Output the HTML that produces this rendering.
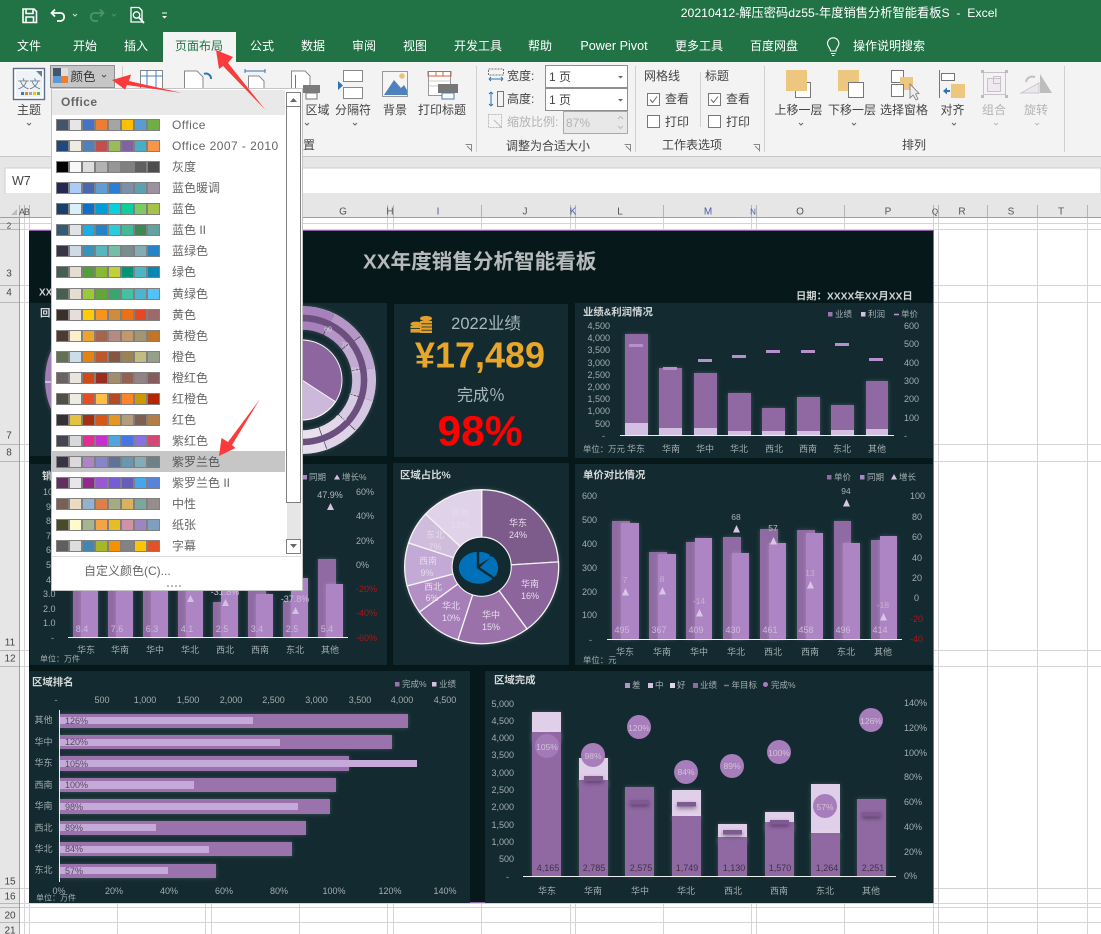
<!DOCTYPE html>
<html><head><meta charset="utf-8"><style>
html,body{margin:0;padding:0;background:#fff}
#p{position:relative;width:1101px;height:934px;overflow:hidden;font-family:"Liberation Sans","Noto Sans CJK SC",sans-serif}
svg{position:absolute;left:0;top:0}
text{font-family:"Liberation Sans","Noto Sans CJK SC",sans-serif;dominant-baseline:central}
.tb{font-size:12px;fill:#fff;text-anchor:middle}
.rb{font-size:12px;fill:#444;text-anchor:middle}
.rl{font-size:12px;fill:#444}
.ch{font-size:10px;fill:#555;text-anchor:middle}
.rh{font-size:10px;fill:#444;text-anchor:middle}
.ax{font-size:9px;fill:#a3aeb0}
.ar{font-size:9px;fill:#a3aeb0;text-anchor:end}
.am{font-size:9px;fill:#a3aeb0;text-anchor:middle}
.re{font-size:9px;fill:#b01414}
.ti{font-size:10.4px;font-weight:bold;fill:#d4d8d8}
.lg{font-size:8.5px;fill:#a3aeb0}
.pv{font-size:9px;fill:#e6dcec;text-anchor:middle}
.bv{font-size:9px;fill:#cdbcd6;text-anchor:middle}
.dv{font-size:9px;fill:#3e3346;text-anchor:middle}
.pc{font-size:9px;fill:#574a60}
.bb{font-size:8.5px;fill:#cfc4d6;text-anchor:middle}
.gl{filter:drop-shadow(0 0 2px rgba(255,255,255,.2))}
#d{position:absolute;left:51px;top:88px;width:252px;height:503px;background:#fff;border:1px solid #c4c4c4;box-sizing:border-box}
#oh{position:absolute;left:52px;top:90px;width:233px;height:25px;background:#e9e9e9;font-size:12px;font-weight:bold;color:#666;line-height:24px;padding-left:9px;box-sizing:border-box;letter-spacing:.4px}
#hl{position:absolute;left:52px;top:451px;width:233px;height:21px;background:#c6c6c6}
.r{position:absolute;left:56px;width:104px;height:12px;background:#808080}
.r i{position:absolute;top:1px;width:11px;height:10px}
.r i:nth-child(1){left:1px}.r i:nth-child(2){left:14px}.r i:nth-child(3){left:27px}.r i:nth-child(4){left:40px}.r i:nth-child(5){left:53px}.r i:nth-child(6){left:66px}.r i:nth-child(7){left:79px}.r i:nth-child(8){left:92px}
.r span{position:absolute;left:116px;top:-3px;line-height:18px;font-size:12px;color:#666;white-space:nowrap}
.l{letter-spacing:.45px}
</style></head><body><div id="p">
<svg width="1101" height="934" viewBox="0 0 1101 934">
<!-- sheet -->
<rect width="1101" height="934" fill="#fff"/>
<g stroke="#d4d4d4" stroke-width="1">
<path d="M24.5 217V934M29.5 217V934M117.5 217V934M205.5 217V934M211.5 217V934M299.5 217V934M387.5 217V934M393.5 217V934M481.5 217V934M570.5 217V934M575.5 217V934M663.5 217V934M751.5 217V934M756.5 217V934M844.5 217V934M933.5 217V934M938.5 217V934M987.5 217V934M1037.5 217V934M1087.5 217V934"/>
<path d="M19 223.5H1101M19 229.5H1101M19 285.5H1101M19 302.5H1101M19 444.5H1101M19 461.5H1101M19 650.5H1101M19 666.5H1101M19 888.5H1101M19 903.5H1101M19 907.5H1101M19 922.5H1101"/>
</g>
<rect x="0" y="217" width="19" height="717" fill="#e6e6e6"/>
<path d="M19.5 217V934" stroke="#a0a0a0"/>
<g stroke="#b8b8b8"><path d="M0 223.5H19M0 229.5H19M0 285.5H19M0 302.5H19M0 444.5H19M0 461.5H19M0 650.5H19M0 666.5H19M0 888.5H19M0 903.5H19M0 907.5H19M0 922.5H19"/></g>
<text class="rh" x="9" y="274">3</text><text class="rh" x="9" y="293">4</text><text class="rh" x="9" y="436">7</text><text class="rh" x="9" y="453">8</text><text class="rh" x="10" y="643">11</text><text class="rh" x="10" y="659">12</text><text class="rh" x="10" y="882">15</text><text class="rh" x="10" y="897">16</text><text class="rh" x="10" y="916">20</text><text class="rh" x="10" y="931">21</text><text class="rh" x="9" y="226" style="font-size:8px">2</text>
<!-- chrome -->
<rect width="1101" height="62" fill="#217346"/>
<rect y="62" width="1101" height="94" fill="#f3f3f3"/>
<rect y="156" width="1101" height="12" fill="#e6e6e6"/><path d="M0 156.5H1101" stroke="#c8c8c8"/>
<rect y="168" width="1101" height="27" fill="#e6e6e6"/>
<rect x="5" y="168" width="1096" height="26" fill="#fff" stroke="#cfcfcf"/>
<rect y="194" width="1101" height="23" fill="#e6e6e6"/>
<path d="M0 217.5H1101" stroke="#9f9f9f"/>
<g stroke="#b4b4b4"><path d="M19.5 205V217M24.5 205V217M29.5 205V217M299.5 205V217M387.5 205V217M393.5 205V217M481.5 205V217M570.5 205V217M575.5 205V217M663.5 205V217M751.5 205V217M756.5 205V217M844.5 205V217M933.5 205V217M938.5 205V217M987.5 205V217M1037.5 205V217M1087.5 205V217"/></g>
<path d="M17 209V215H11Z" fill="#bdbdbd"/>
<text class="ch" x="22" y="212" style="font-size:9px">A</text><text class="ch" x="27" y="212" style="font-size:9px">B</text>
<text class="ch" x="343" y="212">G</text><text class="ch" x="390" y="212">H</text><text class="ch" x="438" y="212" style="fill:#4a5aa8">I</text><text class="ch" x="525" y="212">J</text><text class="ch" x="573" y="212" style="fill:#4a5aa8">K</text><text class="ch" x="620" y="212">L</text><text class="ch" x="708" y="212" style="fill:#4a5aa8">M</text><text class="ch" x="753" y="212" style="fill:#4a5aa8;font-size:8px">N</text><text class="ch" x="800" y="212">O</text><text class="ch" x="888" y="212">P</text><text class="ch" x="935" y="212" style="font-size:8px">Q</text><text class="ch" x="962" y="212">R</text><text class="ch" x="1011" y="212">S</text><text class="ch" x="1061" y="212">T</text>
<text x="12" y="181" style="font-size:12.5px;fill:#444">W7</text>
<!-- QAT -->
<g fill="none" stroke="#fff" stroke-width="1.6"><path d="M23 9H34L36.5 11.5V22.5H23Z"/><path d="M26 9V13.5H33V9M26 22.5V17H33.5V22.5"/></g>
<g fill="none" stroke="#fff" stroke-width="1.8"><path d="M55 9.5L51.5 13L55 16.5"/><path d="M52 13H60.5C65.5 13 65.5 21 60 21H57"/></g>
<path d="M73 14L75 16L77 14" stroke="#cfe3d7" fill="none"/>
<g fill="none" stroke="#4e9270" stroke-width="1.8"><path d="M100 9.5L103.5 13L100 16.5"/><path d="M103 13H94.5C89.5 13 89.5 21 95 21H98"/></g>
<path d="M112 14L114 16L116 14" stroke="#4e9270" fill="none"/>
<g fill="none" stroke="#fff" stroke-width="1.3"><path d="M131 7.5H139L142 10.5V22H131Z"/><circle cx="136.5" cy="15" r="3.2"/><path d="M139 17.5L144 23" stroke-width="1.8"/></g>
<path d="M162 13H167" stroke="#fff"/><path d="M162 16H167L164.5 18.5Z" fill="#fff"/>
<!-- tabs -->
<text x="839" y="13" style="font-size:12.25px;fill:#fff;text-anchor:middle">20210412-解压密码dz55-年度销售分析智能看板S &#160;- &#160;Excel</text>
<rect x="163" y="32" width="73" height="30" fill="#f3f3f3"/>
<text class="tb" x="29" y="46">文件</text><text class="tb" x="85" y="46">开始</text><text class="tb" x="136" y="46">插入</text>
<text class="tb" x="199" y="46" style="fill:#217346">页面布局</text>
<text class="tb" x="262" y="46">公式</text><text class="tb" x="313" y="46">数据</text><text class="tb" x="364" y="46">审阅</text><text class="tb" x="415" y="46">视图</text><text class="tb" x="478" y="46">开发工具</text><text class="tb" x="540" y="46">帮助</text>
<text class="tb" x="614" y="46" style="font-size:12.6px">Power Pivot</text><text class="tb" x="699" y="46">更多工具</text><text class="tb" x="774" y="46">百度网盘</text><text class="tb" x="889" y="46">操作说明搜索</text>
<g fill="none" stroke="#fff" stroke-width="1.1"><path d="M830.5 51C830.5 47.5 827.5 47 827.5 43.5A5.7 5.7 0 0 1 838.9 43.5C838.9 47 835.9 47.5 835.9 51Z"/><path d="M831 53.5H835.5M832 55.5H834.5"/></g>
<!-- theme button -->
<rect x="13.5" y="68.5" width="31" height="31" fill="#fff" stroke="#5c6f8c" stroke-width="1.4"/>
<path d="M16 71H37L42 76V97H16Z" fill="#eef3f7"/><path d="M36 71H42V77Z" fill="#6a7c96"/>
<text x="23.5" y="85" style="font-size:11.5px;fill:#6b7f8f;text-anchor:middle">文</text><text x="35" y="85" style="font-size:11.5px;fill:#6b7f8f;text-anchor:middle">文</text>
<g><rect x="21" y="92" width="3" height="3" fill="#4472c4"/><rect x="25" y="92" width="3" height="3" fill="#ed7d31"/><rect x="29" y="92" width="3" height="3" fill="#a5a5a5"/><rect x="33" y="92" width="3" height="3" fill="#ffc000"/><rect x="37" y="92" width="3" height="3" fill="#70ad47"/></g>
<text class="rb" x="29" y="110">主题</text><path d="M27 123L29 125L31 123" fill="none" stroke="#666"/>
<!-- colors btn -->
<rect x="50.5" y="65.5" width="64" height="22" fill="#c6c6c6" stroke="#8f8f8f"/>
<rect x="53" y="68" width="8" height="8" fill="#44546a"/><rect x="61" y="68" width="7" height="8" fill="#dfdfdf"/><rect x="53" y="76" width="8" height="7" fill="#5b9bd5"/><rect x="61" y="76" width="7" height="7" fill="#ed7d31"/>
<text class="rb" x="83" y="77" style="fill:#333;font-size:12.5px">颜色</text><path d="M102 75L104 77L106 75" fill="none" stroke="#555"/>
<path d="M122.5 66V150" stroke="#d0d0d0"/>
<!-- hidden row icons -->
<g fill="none" stroke="#4a7ebb"><rect x="140.5" y="70.5" width="22" height="18" fill="#fff" stroke="#888"/><path d="M147 70V89M156 70V89M140 76H163"/></g>
<path d="M184.5 88V71H197L203 77V88" fill="#fff" stroke="#888"/><path d="M204 74A5 5 0 0 1 211 79" fill="none" stroke="#2e75b6" stroke-width="2"/>
<path d="M245 71H265M245 69V73M265 69V73" stroke="#2e75b6"/><path d="M248.5 88V76H259L264 81V88" fill="#fff" stroke="#888"/>
<path d="M291.5 98V71H305L310 76V85" fill="#fff" stroke="#888"/><path d="M295.5 75V98" stroke="#4a7ebb" fill="none"/><rect x="303" y="85" width="17" height="8" fill="#7a7a7a"/><rect x="306" y="93" width="11" height="6" fill="#fff" stroke="#777"/>
<text class="rb" x="317.5" y="110">区域</text><path d="M305 123L307 125L309 123" fill="none" stroke="#666"/>
<rect x="343.5" y="70.5" width="19" height="11" fill="#fff" stroke="#888"/><rect x="343.5" y="87.5" width="19" height="11" fill="#fff" stroke="#888"/><path d="M338 81V90L343 85.5Z" fill="#2e75b6"/>
<text class="rb" x="353" y="110">分隔符</text><path d="M353 123L355 125L357 123" fill="none" stroke="#666"/>
<rect x="382.5" y="71.5" width="25" height="25" fill="#f5f5f5" stroke="#999"/><path d="M384 95L394 80L401 88L404 85L407 90V95Z" fill="#4f81bd"/><circle cx="402" cy="76" r="2.8" fill="#e9c37c"/>
<text class="rb" x="395" y="110">背景</text>
<rect x="428.5" y="71.5" width="22" height="24" fill="#fff" stroke="#999"/><path d="M428 71.5H451V76H428ZM436 71V76M443 71V76" fill="none" stroke="#d4603a"/><path d="M429 81H450M429 86H450" stroke="#ccc"/><rect x="438" y="84" width="20" height="9" fill="#777"/><rect x="442" y="93" width="12" height="6" fill="#fff" stroke="#4a7ebb"/>
<text class="rb" x="442" y="110">打印标题</text>
<text class="rb" x="309" y="145">置</text>
<path d="M465.5 144.5H471.5V151.5M467 146L471 150" fill="none" stroke="#888"/>
<path d="M476.5 66V152" stroke="#d0d0d0"/>
<!-- scale group -->
<g fill="none" stroke="#777"><rect x="488.5" y="69" width="15" height="6" stroke-dasharray="2 1"/></g><path d="M489 79H503M489 79L491 77M489 79L491 81M503 79L501 77M503 79L501 81" stroke="#2e75b6" fill="none"/>
<path d="M491 92V106M491 92L489 94M491 92L493 94M491 106L489 104M491 106L493 104" stroke="#2e75b6" fill="none"/><rect x="497.5" y="91.5" width="6" height="15" fill="none" stroke="#777"/>
<rect x="488.5" y="114.5" width="13" height="13" fill="none" stroke="#bbb" stroke-dasharray="2 1"/><path d="M494 120L502 128" stroke="#bbb"/>
<text class="rl" x="507" y="76">宽度:</text><text class="rl" x="507" y="99">高度:</text><text class="rl" x="507" y="122" style="fill:#b4b4b4">缩放比例:</text>
<rect x="545.5" y="65.5" width="82" height="22" fill="#fff" stroke="#8f8f8f"/><rect x="545.5" y="88.5" width="82" height="22" fill="#fff" stroke="#8f8f8f"/>
<rect x="563.5" y="111.5" width="64" height="22" fill="#e8e8e8" stroke="#aaa"/>
<text class="rl" x="549" y="77">1 页</text><text class="rl" x="549" y="100">1 页</text><text class="rl" x="566" y="123" style="fill:#b4b4b4">87%</text>
<path d="M618 76H623L620.5 78.5ZM618 99H623L620.5 101.5Z" fill="#666"/><path d="M618 119L620.5 116.5L623 119M618 126L620.5 128.5L623 126" fill="none" stroke="#bbb"/>
<text class="rb" x="548" y="146">调整为合适大小</text><path d="M624.5 144.5H630.5V151.5M626 146L630 150" fill="none" stroke="#888"/>
<path d="M635.5 66V152" stroke="#d0d0d0"/>
<!-- sheet options -->
<text class="rl" x="644" y="76">网格线</text><text class="rl" x="705" y="76">标题</text><path d="M700.5 72V127" stroke="#d0d0d0"/>
<g fill="#fff" stroke="#777"><rect x="647.5" y="93.5" width="12" height="12"/><rect x="647.5" y="115.5" width="12" height="12"/><rect x="708.5" y="93.5" width="12" height="12"/><rect x="708.5" y="115.5" width="12" height="12"/></g>
<path d="M650 99.5L652.5 102.5L657 96.5M711 99.5L713.5 102.5L718 96.5" fill="none" stroke="#666"/>
<text class="rl" x="665" y="99">查看</text><text class="rl" x="665" y="122">打印</text><text class="rl" x="726" y="99">查看</text><text class="rl" x="726" y="122">打印</text>
<text class="rb" x="692" y="145">工作表选项</text><path d="M753.5 144.5H759.5V151.5M755 146L759 150" fill="none" stroke="#888"/>
<path d="M764.5 66V152" stroke="#d0d0d0"/>
<!-- arrange -->
<rect x="795.5" y="82.5" width="15" height="15" fill="#fff" stroke="#777"/><rect x="786" y="70" width="21" height="21" fill="#edc67f"/>
<text class="rb" x="798.5" y="110">上移一层</text><path d="M799 123L801 125L803 123" fill="none" stroke="#666"/>
<rect x="838" y="70" width="21" height="21" fill="#edc67f"/><rect x="848.5" y="82.5" width="15" height="15" fill="#fff" stroke="#777"/>
<text class="rb" x="852" y="110">下移一层</text><path d="M852 123L854 125L856 123" fill="none" stroke="#666"/>
<rect x="891.5" y="70.5" width="12" height="12" fill="#fff" stroke="#777"/><rect x="900" y="77" width="13" height="13" fill="#edc67f"/><rect x="891.5" y="84.5" width="12" height="12" fill="#fff" stroke="#777"/><path d="M910 84V98L913 95L916 100L918 99L915.5 94L919 93.5Z" fill="#eee" stroke="#777" stroke-width=".8"/>
<text class="rb" x="904" y="110">选择窗格</text>
<path d="M939.5 70V98" stroke="#777"/><rect x="941.5" y="73.5" width="13" height="7" fill="#fff" stroke="#777"/><path d="M943 91L947 87.5V94.5Z" fill="#2e75b6"/><path d="M946 91H950" stroke="#2e75b6" stroke-width="2"/><rect x="951" y="84" width="14" height="14" fill="#edc67f"/>
<text class="rb" x="952.5" y="110">对齐</text><path d="M952 123L954 125L956 123" fill="none" stroke="#666"/>
<g fill="none" stroke="#c8c0ca"><rect x="983.5" y="72.5" width="22" height="22"/><rect x="987.5" y="78.5" width="13" height="13" fill="#efe9f2"/><rect x="993.5" y="76.5" width="7" height="7"/></g><g fill="#bbb"><rect x="981" y="70" width="3" height="3"/><rect x="1005" y="70" width="3" height="3"/><rect x="981" y="95" width="3" height="3"/><rect x="1005" y="95" width="3" height="3"/></g>
<text class="rb" x="994" y="110" style="fill:#b4b4b4">组合</text><path d="M994 123L996 125L998 123" fill="none" stroke="#bbb"/>
<path d="M1021 93L1039 83V93Z" fill="#ece7ef" stroke="#c8c8c8"/><path d="M1040 74L1052 93H1040Z" fill="#bdbdbd"/><path d="M1026 82C1027 77 1031 76 1035 77" fill="none" stroke="#c0c0c0" stroke-width="2"/>
<text class="rb" x="1036" y="110" style="fill:#b4b4b4">旋转</text><path d="M1035 123L1037 125L1039 123" fill="none" stroke="#bbb"/>
<text class="rb" x="914" y="145">排列</text>
<path d="M1064.5 66V152" stroke="#d0d0d0"/>

<!-- dashboard -->
<rect x="29" y="230" width="905" height="673" fill="#07181b"/>
<path d="M29 230.5H934" stroke="#8a62a0"/><path d="M933.5 230V903" stroke="#8b6a9c"/><path d="M470 902.5H486" stroke="#8a62a0"/>
<g fill="#132a30">
<rect x="30" y="303" width="357" height="153"/><rect x="394" y="304" width="174" height="153"/><rect x="575" y="303" width="358" height="155"/>
<rect x="30" y="464" width="357" height="201"/><rect x="393" y="463" width="176" height="202"/><rect x="575" y="464" width="358" height="201"/>
<rect x="29" y="671" width="441" height="232"/><rect x="485" y="671" width="448" height="232"/>
</g>
<text x="363" y="262" style="font-size:20.6px;font-weight:bold;fill:#b6baba">XX年度销售分析智能看板</text>
<text x="796" y="297" style="font-size:10.3px;font-weight:bold;fill:#cfd2d2">日期：XXXX年XX月XX日</text>
<text x="39" y="293" style="font-size:10px;font-weight:bold;fill:#cfd2d2">XX</text><text x="40" y="314" class="ti">回</text>

<!-- donuts -->
<g class="gl">
<circle cx="119" cy="380" r="69.5" fill="none" stroke="#a07db2" stroke-width="9"/>
<path d="M45 382H54" stroke="#fff" stroke-width="1"/>
<g transform="translate(302 380)" fill="none">
<circle r="73.5" fill="none" stroke="#fff" stroke-width=".8"/>
<g stroke-width="8.6">
<circle r="69.5" stroke="#a880bc" pathLength="360" stroke-dasharray="27 333" transform="rotate(-91)"/>
<circle r="69.5" stroke="#b596c6" pathLength="360" stroke-dasharray="26.5 333.5" transform="rotate(-63.5)"/>
<circle r="69.5" stroke="#bfa6d0" pathLength="360" stroke-dasharray="26.5 333.5" transform="rotate(-36)"/>
<circle r="69.5" stroke="#cbb8da" pathLength="360" stroke-dasharray="25.5 334.5" transform="rotate(-9)"/>
<circle r="69.5" stroke="#d6c8e2" pathLength="360" stroke-dasharray="26 334" transform="rotate(17)"/>
<circle r="69.5" stroke="#dfd3e8" pathLength="360" stroke-dasharray="26 334" transform="rotate(44)"/>
<circle r="69.5" stroke="#e6ddec" pathLength="360" stroke-dasharray="50 310" transform="rotate(71)"/>
</g>
<circle r="62" stroke="#6c4f7e" stroke-width="6.4"/>
<g stroke-width="8.6">
<circle r="54.5" stroke="#a880bc" pathLength="360" stroke-dasharray="26 334" transform="rotate(-91)"/>
<circle r="54.5" stroke="#b596c6" pathLength="360" stroke-dasharray="26 334" transform="rotate(-64)"/>
<circle r="54.5" stroke="#c3acd3" pathLength="360" stroke-dasharray="26 334" transform="rotate(-37)"/>
<circle r="54.5" stroke="#cdbbdb" pathLength="360" stroke-dasharray="26 334" transform="rotate(-10)"/>
<circle r="54.5" stroke="#d8cbe3" pathLength="360" stroke-dasharray="26 334" transform="rotate(17)"/>
<circle r="54.5" stroke="#e2d8ea" pathLength="360" stroke-dasharray="26 334" transform="rotate(44)"/>
<circle r="54.5" stroke="#e9e1ee" pathLength="360" stroke-dasharray="50 310" transform="rotate(71)"/>
</g>
</g>
<circle cx="302" cy="380" r="40" fill="#8d669f" stroke="#fff" stroke-width=".9"/>
<path d="M302 380L335.5 401.8A40 40 0 0 1 267.4 400Z" fill="#cbb8da" stroke="#fff" stroke-width=".9"/>
</g>
<g fill="#dcd6e0" text-anchor="middle"><text x="328" y="330" style="font-size:7px">60</text><text x="345" y="346" style="font-size:7px">70</text><text x="355" y="371" style="font-size:7px">80</text><text x="353" y="397" style="font-size:7px">90</text><text x="341" y="419" style="font-size:7px">100</text></g>

<!-- KPI -->
<g fill="#e0a02a"><ellipse cx="416" cy="324" rx="5.5" ry="2.4"/><rect x="410.5" y="326" width="11" height="2.2"/><rect x="410.5" y="329" width="11" height="2.2"/><rect x="410.5" y="331" width="11" height="1.6"/><ellipse cx="426" cy="318.5" rx="6" ry="2.6"/><rect x="420" y="321" width="12" height="2.4"/><rect x="420" y="324.2" width="12" height="2.4"/><rect x="420" y="327.4" width="12" height="2.4"/><rect x="420" y="330.6" width="12" height="2.4"/></g>
<text x="486" y="324" style="font-size:16.5px;fill:#a9b9bb;text-anchor:middle">2022业绩</text>
<text x="480" y="355" style="font-size:36px;font-weight:bold;fill:#e9a72a;text-anchor:middle">¥17,489</text>
<text x="481" y="396" style="font-size:16px;fill:#a9b9bb;text-anchor:middle">完成％</text>
<text x="480" y="432" style="font-size:42.5px;font-weight:bold;fill:#f00;text-anchor:middle">98%</text>

<!-- Panel: profit -->
<text class="ti" x="583" y="313">业绩&amp;利润情况</text>
<rect x="828" y="312" width="4.5" height="4.5" fill="#9a72ac"/><text class="lg" x="835" y="314">业绩</text><rect x="861" y="312" width="4.5" height="4.5" fill="#d4c0e2"/><text class="lg" x="868" y="314">利润</text><path d="M894 314.5H899" stroke="#b58dcb" stroke-width="1.6"/><text class="lg" x="901" y="314">单价</text>
<text class="ar" x="610" y="326">4,500</text><text class="ar" x="610" y="338">4,000</text><text class="ar" x="610" y="350">3,500</text><text class="ar" x="610" y="363">3,000</text><text class="ar" x="610" y="375">2,500</text><text class="ar" x="610" y="387">2,000</text><text class="ar" x="610" y="399">1,500</text><text class="ar" x="610" y="411">1,000</text><text class="ar" x="610" y="424">500</text><text class="ar" x="605" y="436">-</text>
<text class="ax" x="904" y="326">600</text><text class="ax" x="904" y="344">500</text><text class="ax" x="904" y="363">400</text><text class="ax" x="904" y="381">300</text><text class="ax" x="904" y="399">200</text><text class="ax" x="904" y="418">100</text><text class="ax" x="904" y="436">-</text>
<g class="gl" fill="#9069a3">
<rect x="625" y="334" width="23" height="101"/><rect x="659" y="368" width="23" height="67"/><rect x="694" y="373" width="23" height="62"/><rect x="728" y="393" width="23" height="42"/><rect x="762" y="408" width="23" height="27"/><rect x="797" y="397" width="23" height="38"/><rect x="831" y="405" width="23" height="30"/><rect x="866" y="381" width="22" height="54"/>
</g>
<g fill="#d3bfe1"><rect x="625" y="423" width="23" height="12"/><rect x="659" y="428" width="23" height="7"/><rect x="694" y="428" width="23" height="7"/><rect x="728" y="431" width="23" height="4"/><rect x="762" y="431" width="23" height="4"/><rect x="797" y="431" width="23" height="4"/><rect x="831" y="430" width="23" height="5"/><rect x="866" y="429" width="22" height="6"/></g>
<g fill="#b78ece"><rect x="629" y="344" width="14" height="3"/><rect x="663" y="367" width="14" height="3"/><rect x="698" y="359" width="14" height="3"/><rect x="732" y="355" width="14" height="3"/><rect x="766" y="350" width="14" height="3"/><rect x="801" y="350" width="14" height="3"/><rect x="835" y="343" width="14" height="3"/><rect x="869" y="358" width="14" height="3"/></g>
<path d="M620 435.5H894" stroke="#f0f0f0"/>
<text class="ax" x="583" y="449" style="font-size:8.4px">单位：万元</text>
<text class="am" x="636" y="449">华东</text><text class="am" x="671" y="449">华南</text><text class="am" x="705" y="449">华中</text><text class="am" x="739" y="449">华北</text><text class="am" x="774" y="449">西北</text><text class="am" x="808" y="449">西南</text><text class="am" x="842" y="449">东北</text><text class="am" x="877" y="449">其他</text>

<!-- Panel: sales compare (left) -->
<text class="ti" x="42" y="477">销</text>
<text class="ax" x="43" y="492">10</text><text class="ax" x="46" y="507">9</text><text class="ax" x="46" y="521">8</text><text class="ax" x="46" y="536">7</text><text class="ax" x="46" y="550">6</text><text class="ax" x="46" y="565">5</text><text class="ax" x="46" y="580">4</text><text class="ax" x="43" y="594">3.0</text><text class="ax" x="43" y="609">2.0</text><text class="ax" x="43" y="623">1.0</text><text class="ax" x="51" y="638">-</text>
<text class="ax" x="356" y="492">60%</text><text class="ax" x="356" y="516">40%</text><text class="ax" x="356" y="541">20%</text><text class="ax" x="356" y="565">0%</text><text class="re" x="356" y="589">-20%</text><text class="re" x="356" y="613">-40%</text><text class="re" x="356" y="638">-60%</text>
<rect x="303" y="475" width="4" height="4.5" fill="#ad84c4"/><text class="lg" x="309" y="477">同期</text><path d="M337 474.5L340 479.5H334Z" fill="#d5c0e0"/><text class="lg" x="342" y="477">增长%</text>
<g class="gl" fill="#8f6aa3"><rect x="73" y="560" width="18" height="77"/><rect x="108" y="560" width="18" height="77"/><rect x="143" y="560" width="18" height="77"/><rect x="178" y="560" width="18" height="77"/><rect x="213" y="602" width="18" height="35"/><rect x="248" y="580" width="18" height="57"/><rect x="283" y="601" width="18" height="36"/><rect x="318" y="559" width="18" height="78"/></g>
<g class="gl" fill="#ad84c4"><rect x="81" y="560" width="17" height="77"/><rect x="116" y="560" width="17" height="77"/><rect x="151" y="560" width="17" height="77"/><rect x="186" y="560" width="17" height="77"/><rect x="221" y="585" width="17" height="52"/><rect x="256" y="594" width="17" height="43"/><rect x="291" y="578" width="17" height="59"/><rect x="326" y="584" width="17" height="53"/></g>
<path d="M68 637.5H348" stroke="#f0f0f0"/>
<text class="bv" x="82" y="629">8.4</text><text class="bv" x="117" y="629">7.6</text><text class="bv" x="152" y="629">6.3</text><text class="bv" x="187" y="629">4.1</text><text class="bv" x="222" y="629">2.5</text><text class="bv" x="257" y="629">3.4</text><text class="bv" x="292" y="629">2.5</text><text class="bv" x="327" y="629">5.4</text>
<g fill="#d5c0e0"><path d="M190.5 595L194 602H187Z"/><path d="M225.5 599L229 606H222Z"/><path d="M295.5 607L299 614H292Z"/><path d="M330.5 503L334 510H327Z"/></g>
<text class="bv" x="330" y="495" style="fill:#b8bcc0">47.9%</text><text class="bv" x="295" y="599">-37.8%</text><text class="bv" x="225" y="592">-31.8%</text>
<text class="am" x="86" y="650">华东</text><text class="am" x="120" y="650">华南</text><text class="am" x="155" y="650">华中</text><text class="am" x="190" y="650">华北</text><text class="am" x="225" y="650">西北</text><text class="am" x="260" y="650">西南</text><text class="am" x="295" y="650">东北</text><text class="am" x="330" y="650">其他</text>
<text class="ax" x="40" y="659" style="font-size:8px">单位：万件</text>

<!-- Pie -->
<text class="ti" x="400" y="476">区域占比%</text>
<g class="gl" stroke="#f4f4f4" stroke-width="1.3">
<path fill="#7d5c8b" d="M481.7 489.7A77 77 0 0 1 558.5 561.9L511.1 564.85A29.5 29.5 0 0 0 481.7 537.2Z"/>
<path fill="#8b659b" d="M558.5 561.9A77 77 0 0 1 527 629L499 590.6A29.5 29.5 0 0 0 511.1 564.85Z"/>
<path fill="#9a72a9" d="M527 629A77 77 0 0 1 457.9 639.9L472.6 594.8A29.5 29.5 0 0 0 499 590.6Z"/>
<path fill="#a67fb8" d="M457.9 639.9A77 77 0 0 1 419.4 612L457.8 584A29.5 29.5 0 0 0 472.6 594.8Z"/>
<path fill="#b48fc6" d="M419.4 612A77 77 0 0 1 407.1 585.9L453.1 574A29.5 29.5 0 0 0 457.8 584Z"/>
<path fill="#c3a9d5" d="M407.1 585.9A77 77 0 0 1 408.5 542.9L453.6 557.6A29.5 29.5 0 0 0 453.1 574Z"/>
<path fill="#d0bcdd" d="M408.5 542.9A77 77 0 0 1 425.6 514L460.2 546.5A29.5 29.5 0 0 0 453.6 557.6Z"/>
<path fill="#e0d2e8" d="M425.6 514A77 77 0 0 1 481.7 489.7V537.2A29.5 29.5 0 0 0 460.2 546.5Z"/>
</g>
<text class="pv" x="518" y="523">华东</text><text class="pv" x="518" y="535">24%</text><text class="pv" x="530" y="584">华南</text><text class="pv" x="530" y="596">16%</text><text class="pv" x="491" y="615">华中</text><text class="pv" x="491" y="627">15%</text><text class="pv" x="451" y="606">华北</text><text class="pv" x="451" y="618">10%</text><text class="pv" x="433" y="587">西北</text><text class="pv" x="432" y="598">6%</text><text class="pv" x="428" y="561">西南</text><text class="pv" x="427" y="573">9%</text><text class="pv" x="435" y="535">东北</text><text class="pv" x="435" y="547">7%</text><text class="pv" x="460" y="513">其他</text><text class="pv" x="460" y="525">13%</text>
<circle cx="481.7" cy="566.7" r="29" fill="#132a30"/>
<ellipse cx="478.5" cy="567.7" rx="19.7" ry="16" fill="#0070b8"/>
<path d="M478 550V567.5L498 581M478 567.5L495 552" stroke="#132a30" stroke-width="2.4" fill="none"/>
<path d="M480 552L492 557L480 564Z" fill="#0070b8"/>

<!-- Panel: price -->
<text class="ti" x="583" y="476">单价对比情况</text>
<rect x="827" y="475" width="4.5" height="4.5" fill="#8f6aa3"/><text class="lg" x="834" y="477">单价</text><rect x="860" y="475" width="4.5" height="4.5" fill="#ad84c4"/><text class="lg" x="867" y="477">同期</text><path d="M894 474L897 479.5H891Z" fill="#d5c0e0"/><text class="lg" x="899" y="477">增长</text>
<text class="ar" x="597" y="496">600</text><text class="ar" x="597" y="520">500</text><text class="ar" x="597" y="544">400</text><text class="ar" x="597" y="568">300</text><text class="ar" x="597" y="592">200</text><text class="ar" x="597" y="615">100</text><text class="ar" x="592" y="640">-</text>
<text class="ax" x="910" y="496">100</text><text class="ax" x="912" y="517">80</text><text class="ax" x="912" y="537">60</text><text class="ax" x="912" y="558">40</text><text class="ax" x="912" y="578">20</text><text class="ax" x="914" y="598">0</text><text class="re" x="910" y="619">-20</text><text class="re" x="910" y="639">-40</text>
<g class="gl" fill="#8f6aa3"><rect x="612" y="521" width="18" height="118"/><rect x="649" y="552" width="18" height="87"/><rect x="686" y="542" width="18" height="97"/><rect x="723" y="537" width="18" height="102"/><rect x="760" y="529" width="18" height="110"/><rect x="797" y="530" width="18" height="109"/><rect x="834" y="521" width="17" height="118"/><rect x="871" y="540" width="18" height="99"/></g>
<g class="gl" fill="#ad84c4"><rect x="621" y="523" width="18" height="116"/><rect x="658" y="554" width="18" height="85"/><rect x="695" y="538" width="17" height="101"/><rect x="732" y="553" width="17" height="86"/><rect x="769" y="543" width="17" height="96"/><rect x="806" y="533" width="17" height="106"/><rect x="843" y="543" width="17" height="96"/><rect x="880" y="536" width="17" height="103"/></g>
<path d="M607 639.5H902" stroke="#f0f0f0"/>
<g fill="#d9c6e4"><path d="M625.5 588L629 595.5H622Z"/><path d="M662.5 587L666 594.5H659Z"/><path d="M699.5 609L703 616.5H696Z"/><path d="M736.5 525L740 532.5H733Z"/><path d="M773.5 537L777 544.5H770Z"/><path d="M810.5 581L814 588.5H807Z"/><path d="M846.5 499L850 506.5H843Z"/><path d="M883.5 613L887 620.5H880Z"/></g>
<g><text class="bb" x="625" y="580" style="fill:#c4b4cc">7</text><text class="bb" x="662" y="579" style="fill:#c4b4cc">8</text><text class="bb" x="699" y="601" style="fill:#c4b4cc">-14</text><text class="bb" x="736" y="517" style="fill:#a8b0b2">68</text><text class="bb" x="773" y="528" style="fill:#c4b4cc">57</text><text class="bb" x="810" y="573" style="fill:#c4b4cc">13</text><text class="bb" x="846" y="491" style="fill:#a8b0b2">94</text><text class="bb" x="883" y="605" style="fill:#c4b4cc">-18</text></g>
<text class="bv" x="622" y="630">495</text><text class="bv" x="659" y="630">367</text><text class="bv" x="696" y="630">409</text><text class="bv" x="733" y="630">430</text><text class="bv" x="770" y="630">461</text><text class="bv" x="806" y="630">458</text><text class="bv" x="843" y="630">496</text><text class="bv" x="880" y="630">414</text>
<text class="am" x="625" y="652">华东</text><text class="am" x="662" y="652">华南</text><text class="am" x="699" y="652">华中</text><text class="am" x="736" y="652">华北</text><text class="am" x="773" y="652">西北</text><text class="am" x="810" y="652">西南</text><text class="am" x="846" y="652">东北</text><text class="am" x="883" y="652">其他</text>
<text class="ax" x="583" y="660" style="font-size:8.4px">单位：元</text>

<!-- Rank -->
<text class="ti" x="32" y="683">区域排名</text>
<rect x="395" y="682" width="4.5" height="4.5" fill="#9a72ac"/><text class="lg" x="402" y="684">完成%</text><rect x="432" y="682" width="4.5" height="4.5" fill="#d4c0e2"/><text class="lg" x="439" y="684">业绩</text>
<text class="am" x="56" y="700">-</text><text class="am" x="102" y="700">500</text><text class="am" x="145" y="700">1,000</text><text class="am" x="188" y="700">1,500</text><text class="am" x="231" y="700">2,000</text><text class="am" x="273.5" y="700">2,500</text><text class="am" x="316.5" y="700">3,000</text><text class="am" x="360" y="700">3,500</text><text class="am" x="402" y="700">4,000</text><text class="am" x="445" y="700">4,500</text>
<g class="gl" fill="#9a72ac"><rect x="60" y="714" width="348" height="14"/><rect x="60" y="735" width="332" height="14"/><rect x="60" y="756" width="289" height="15"/><rect x="60" y="778" width="276" height="14"/><rect x="60" y="799" width="270" height="15"/><rect x="60" y="821" width="246" height="14"/><rect x="60" y="842" width="232" height="14"/><rect x="60" y="864" width="156" height="14"/></g>
<g fill="#c5a9d8"><rect x="60" y="717" width="193" height="7"/><rect x="60" y="739" width="220" height="7"/><rect x="60" y="760" width="357" height="7"/><rect x="60" y="781" width="134" height="8"/><rect x="60" y="803" width="238" height="7"/><rect x="60" y="824" width="96" height="7"/><rect x="60" y="846" width="149" height="7"/><rect x="60" y="867" width="108" height="7"/></g>
<path d="M59.5 710V882" stroke="#f0f0f0"/>
<text class="pc" x="65" y="721">126%</text><text class="pc" x="65" y="742">120%</text><text class="pc" x="65" y="764">105%</text><text class="pc" x="65" y="785">100%</text><text class="pc" x="65" y="807">98%</text><text class="pc" x="65" y="828">89%</text><text class="pc" x="65" y="849">84%</text><text class="pc" x="65" y="871">57%</text>
<text class="am" x="43.5" y="720">其他</text><text class="am" x="43.5" y="742">华中</text><text class="am" x="43.5" y="763">华东</text><text class="am" x="43.5" y="785">西南</text><text class="am" x="43.5" y="806">华南</text><text class="am" x="43.5" y="828">西北</text><text class="am" x="43.5" y="849">华北</text><text class="am" x="43.5" y="870">东北</text>
<text class="am" x="59" y="891">0%</text><text class="am" x="114" y="891">20%</text><text class="am" x="169" y="891">40%</text><text class="am" x="224" y="891">60%</text><text class="am" x="279" y="891">80%</text><text class="am" x="334" y="891">100%</text><text class="am" x="390" y="891">120%</text><text class="am" x="445" y="891">140%</text>
<text class="ax" x="36" y="898" style="font-size:8px">单位：万件</text>

<!-- Completion -->
<text class="ti" x="494" y="681">区域完成</text>
<rect x="625" y="683" width="5" height="5" fill="#b295c4"/><text class="lg" x="632" y="685">差</text><rect x="648" y="683" width="5" height="5" fill="#d4c0e2"/><text class="lg" x="655" y="685">中</text><rect x="670" y="683" width="5" height="5" fill="#e2d4ea"/><text class="lg" x="677" y="685">好</text><rect x="693" y="683" width="5" height="5" fill="#9069a3"/><text class="lg" x="700" y="685">业绩</text><path d="M724 685.5H729" stroke="#8b6a9c" stroke-width="1.5"/><text class="lg" x="731.5" y="685">年目标</text><circle cx="765.5" cy="684.5" r="2.5" fill="#a87dbb"/><text class="lg" x="771" y="685">完成%</text>
<text class="ar" x="514" y="704">5,000</text><text class="ar" x="514" y="721">4,500</text><text class="ar" x="514" y="738">4,000</text><text class="ar" x="514" y="755">3,500</text><text class="ar" x="514" y="773">3,000</text><text class="ar" x="514" y="790">2,500</text><text class="ar" x="514" y="807">2,000</text><text class="ar" x="514" y="825">1,500</text><text class="ar" x="514" y="842">1,000</text><text class="ar" x="514" y="859">500</text><text class="ar" x="509" y="877">-</text>
<text class="ax" x="904" y="703">140%</text><text class="ax" x="904" y="728">120%</text><text class="ax" x="904" y="753">100%</text><text class="ax" x="904" y="777">80%</text><text class="ax" x="904" y="802">60%</text><text class="ax" x="904" y="827">40%</text><text class="ax" x="904" y="852">20%</text><text class="ax" x="904" y="876">0%</text>
<g class="gl" fill="#e0cfe8"><rect x="532" y="712" width="29" height="30"/><rect x="579" y="758" width="29" height="30"/><rect x="672" y="790" width="29" height="30"/><rect x="718" y="824" width="29" height="20"/><rect x="765" y="812" width="29" height="20"/><rect x="811" y="784" width="29" height="55"/></g>
<g class="gl" fill="#9069a3"><rect x="532" y="732" width="29" height="144"/><rect x="579" y="780" width="29" height="96"/><rect x="625" y="787" width="29" height="89"/><rect x="672" y="816" width="29" height="60"/><rect x="718" y="837" width="29" height="39"/><rect x="765" y="822" width="29" height="54"/><rect x="811" y="833" width="29" height="43"/><rect x="857" y="799" width="29" height="77"/></g>
<g fill="#7e5a90" style="filter:drop-shadow(0 2px 2px rgba(40,20,50,.5))"><rect x="584" y="776" width="19" height="5"/><rect x="630" y="800" width="19" height="4.5"/><rect x="677" y="802" width="19" height="4.5"/><rect x="723" y="830" width="19" height="4.5"/><rect x="770" y="820" width="19" height="4.5"/><rect x="862" y="812" width="19" height="4.5"/></g>
<path d="M523 876.5H896" stroke="#f0f0f0"/>
<g fill="#a87dbb"><circle cx="547" cy="746" r="12" opacity=".85"/><circle cx="593" cy="755" r="12"/><circle cx="639" cy="727" r="12"/><circle cx="686" cy="772" r="12"/><circle cx="732" cy="766" r="12"/><circle cx="779" cy="752" r="12"/><circle cx="825" cy="806" r="12"/><circle cx="871" cy="720" r="12"/></g>
<text class="bb" x="547" y="747">105%</text><text class="bb" x="593" y="756">98%</text><text class="bb" x="639" y="728">120%</text><text class="bb" x="686" y="772">84%</text><text class="bb" x="732" y="766">89%</text><text class="bb" x="779" y="753">100%</text><text class="bb" x="825" y="807">57%</text><text class="bb" x="871" y="721">126%</text>
<text class="dv" x="548" y="868">4,165</text><text class="dv" x="594" y="868">2,785</text><text class="dv" x="641" y="868">2,575</text><text class="dv" x="687" y="868">1,749</text><text class="dv" x="734" y="868">1,130</text><text class="dv" x="780" y="868">1,570</text><text class="dv" x="827" y="868">1,264</text><text class="dv" x="873" y="868">2,251</text>
<text class="am" x="547" y="891">华东</text><text class="am" x="593" y="891">华南</text><text class="am" x="640" y="891">华中</text><text class="am" x="686" y="891">华北</text><text class="am" x="733" y="891">西北</text><text class="am" x="779" y="891">西南</text><text class="am" x="825" y="891">东北</text><text class="am" x="871" y="891">其他</text>
</svg>

<div id="d"></div>
<div id="oh">Office</div>
<div id="hl"></div>
<div class="r" style="top:119px"><i style="background:#44546a"></i><i style="background:#e7e6e6"></i><i style="background:#4472c4"></i><i style="background:#ed7d31"></i><i style="background:#a5a5a5"></i><i style="background:#ffc000"></i><i style="background:#5b9bd5"></i><i style="background:#70ad47"></i><span class="l">Office</span></div>
<div class="r" style="top:140px"><i style="background:#1f497d"></i><i style="background:#eeece1"></i><i style="background:#4f81bd"></i><i style="background:#c0504d"></i><i style="background:#9bbb59"></i><i style="background:#8064a2"></i><i style="background:#4bacc6"></i><i style="background:#f79646"></i><span class="l">Office 2007 - 2010</span></div>
<div class="r" style="top:161px"><i style="background:#000"></i><i style="background:#f8f8f8"></i><i style="background:#ddd"></i><i style="background:#b2b2b2"></i><i style="background:#969696"></i><i style="background:#808080"></i><i style="background:#5f5f5f"></i><i style="background:#4d4d4d"></i><span>灰度</span></div>
<div class="r" style="top:182px"><i style="background:#242852"></i><i style="background:#acccf7"></i><i style="background:#4a66ac"></i><i style="background:#629dd1"></i><i style="background:#297fd5"></i><i style="background:#7f8fa9"></i><i style="background:#5aa2ae"></i><i style="background:#9d90a0"></i><span>蓝色暖调</span></div>
<div class="r" style="top:203px"><i style="background:#17406d"></i><i style="background:#dbeff9"></i><i style="background:#0f6fc6"></i><i style="background:#009dd9"></i><i style="background:#0bd0d9"></i><i style="background:#10cf9b"></i><i style="background:#7cca62"></i><i style="background:#a5c249"></i><span>蓝色</span></div>
<div class="r" style="top:224px"><i style="background:#335b74"></i><i style="background:#dfe3e5"></i><i style="background:#1cade4"></i><i style="background:#2683c6"></i><i style="background:#27ced7"></i><i style="background:#42ba97"></i><i style="background:#3e8853"></i><i style="background:#62a39f"></i><span>蓝色 II</span></div>
<div class="r" style="top:245px"><i style="background:#373545"></i><i style="background:#cedbe6"></i><i style="background:#3494ba"></i><i style="background:#58b6c0"></i><i style="background:#75bda7"></i><i style="background:#7a8c8e"></i><i style="background:#84acb6"></i><i style="background:#2683c6"></i><span>蓝绿色</span></div>
<div class="r" style="top:266px"><i style="background:#455f51"></i><i style="background:#e3ded1"></i><i style="background:#549e39"></i><i style="background:#8ab833"></i><i style="background:#c0cf3a"></i><i style="background:#029676"></i><i style="background:#4ab5c4"></i><i style="background:#0989b1"></i><span>绿色</span></div>
<div class="r" style="top:288px"><i style="background:#455f51"></i><i style="background:#e3ded1"></i><i style="background:#99cb38"></i><i style="background:#63a537"></i><i style="background:#37a76f"></i><i style="background:#44c1a3"></i><i style="background:#4eb3cf"></i><i style="background:#51c3f9"></i><span>黄绿色</span></div>
<div class="r" style="top:309px"><i style="background:#39302a"></i><i style="background:#e5dedb"></i><i style="background:#ffca08"></i><i style="background:#f8931d"></i><i style="background:#ce8d3e"></i><i style="background:#ec7016"></i><i style="background:#e64823"></i><i style="background:#9c6a6a"></i><span>黄色</span></div>
<div class="r" style="top:330px"><i style="background:#4e3b30"></i><i style="background:#fbeec9"></i><i style="background:#f0a22e"></i><i style="background:#a5644e"></i><i style="background:#b58b80"></i><i style="background:#c3986d"></i><i style="background:#a19574"></i><i style="background:#c17529"></i><span>黄橙色</span></div>
<div class="r" style="top:351px"><i style="background:#637052"></i><i style="background:#ccddea"></i><i style="background:#e48312"></i><i style="background:#bd582c"></i><i style="background:#865640"></i><i style="background:#9b8357"></i><i style="background:#c2bc80"></i><i style="background:#94a088"></i><span>橙色</span></div>
<div class="r" style="top:372px"><i style="background:#696464"></i><i style="background:#e9e5dc"></i><i style="background:#d34817"></i><i style="background:#9b2d1f"></i><i style="background:#a28e6a"></i><i style="background:#956251"></i><i style="background:#918485"></i><i style="background:#855d5d"></i><span>橙红色</span></div>
<div class="r" style="top:393px"><i style="background:#505046"></i><i style="background:#eeece0"></i><i style="background:#e84c22"></i><i style="background:#ffbd47"></i><i style="background:#b64926"></i><i style="background:#ff8427"></i><i style="background:#cc9900"></i><i style="background:#b22600"></i><span>红橙色</span></div>
<div class="r" style="top:414px"><i style="background:#323232"></i><i style="background:#e5c243"></i><i style="background:#a5300f"></i><i style="background:#d55816"></i><i style="background:#e19825"></i><i style="background:#b19c7d"></i><i style="background:#7f5f52"></i><i style="background:#b27d49"></i><span>红色</span></div>
<div class="r" style="top:435px"><i style="background:#454551"></i><i style="background:#d8d9dc"></i><i style="background:#e32d91"></i><i style="background:#c830cc"></i><i style="background:#4ea6dc"></i><i style="background:#4775e7"></i><i style="background:#8971e1"></i><i style="background:#d54773"></i><span>紫红色</span></div>
<div class="r" style="top:456px"><i style="background:#373545"></i><i style="background:#dcd8dc"></i><i style="background:#ad84c6"></i><i style="background:#8784c7"></i><i style="background:#5d739a"></i><i style="background:#6997af"></i><i style="background:#84acb6"></i><i style="background:#6f8183"></i><span style="color:#555">紫罗兰色</span></div>
<div class="r" style="top:477px"><i style="background:#632e62"></i><i style="background:#eae5eb"></i><i style="background:#92278f"></i><i style="background:#9b57d3"></i><i style="background:#755dd9"></i><i style="background:#665eb8"></i><i style="background:#45a5ed"></i><i style="background:#5982db"></i><span>紫罗兰色 II</span></div>
<div class="r" style="top:498px"><i style="background:#7a5f53"></i><i style="background:#eadcc3"></i><i style="background:#91b3d1"></i><i style="background:#dd8047"></i><i style="background:#a5ab81"></i><i style="background:#d8b25c"></i><i style="background:#7ba79d"></i><i style="background:#968c8c"></i><span>中性</span></div>
<div class="r" style="top:519px"><i style="background:#444d26"></i><i style="background:#fefac9"></i><i style="background:#a5b592"></i><i style="background:#f3a447"></i><i style="background:#e7bc29"></i><i style="background:#d092a7"></i><i style="background:#9c85c0"></i><i style="background:#809ec2"></i><span>纸张</span></div>
<div class="r" style="top:540px"><i style="background:#5f5f5f"></i><i style="background:#ddd"></i><i style="background:#4287b4"></i><i style="background:#a6b727"></i><i style="background:#f69200"></i><i style="background:#838383"></i><i style="background:#fec306"></i><i style="background:#df5327"></i><span>字幕</span></div>

<svg width="1101" height="934" viewBox="0 0 1101 934" style="pointer-events:none">
<!-- scrollbar -->
<rect x="287" y="107" width="14" height="432" fill="#e6e6e6"/>
<rect x="286.5" y="92.5" width="14" height="14" fill="#fff" stroke="#7f7f7f"/><path d="M290 102L293.5 98L297 102Z" fill="#666"/>
<rect x="286.5" y="106.5" width="14" height="396" fill="#fff" stroke="#7f7f7f"/>
<rect x="286.5" y="539.5" width="14" height="14" fill="#fff" stroke="#7f7f7f"/><path d="M290 544L293.5 548L297 544Z" fill="#666"/>
<path d="M52 556.5H301" stroke="#dedede"/>
<text x="84" y="571" style="font-size:12px;fill:#666">自定义颜色(C)...</text>
<path d="M167 586H183" stroke="#bbb" stroke-width="2" stroke-dasharray="2 2"/>
<!-- arrows -->
<g fill="#fb3b3b">
<path d="M112 80L131 74.5L129 81L182 93L127 85L125 89.5Z"/>
<path d="M216 50L233 57L228 63L265.5 110L223 66L219 69Z"/>
<path d="M219 456L221.5 438L228 442L260 399L232 445L235.5 448Z"/>
</g>
</svg>
</div></body></html>
